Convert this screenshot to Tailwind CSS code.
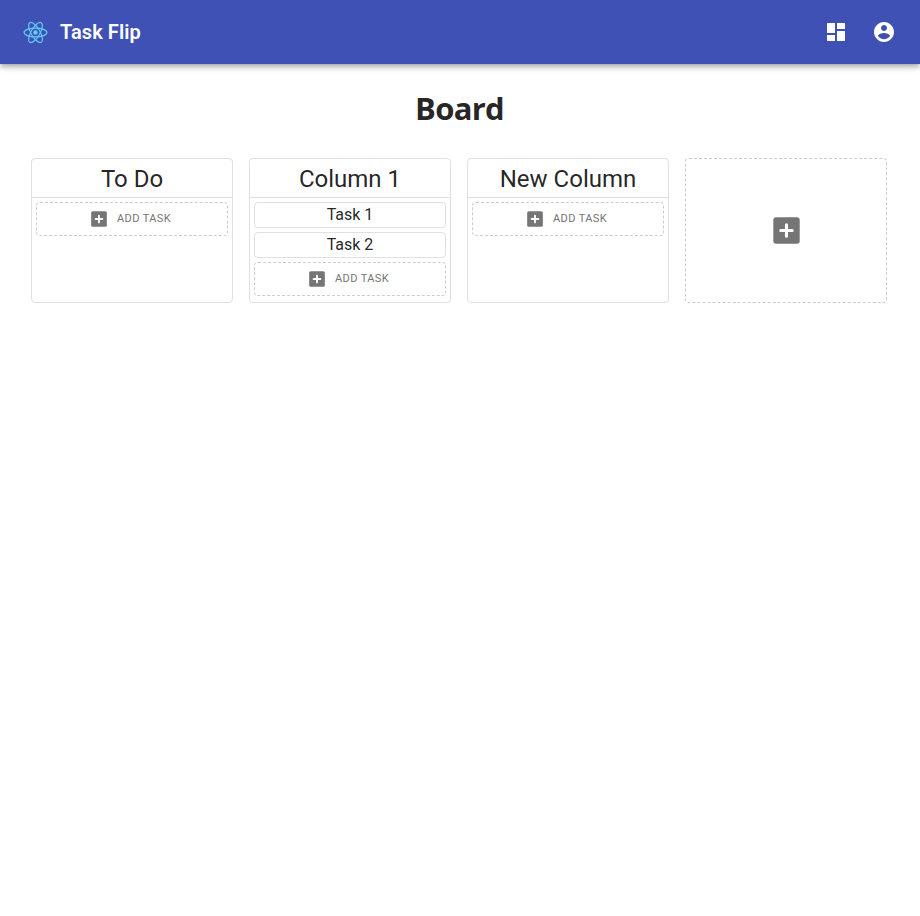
<!DOCTYPE html>
<html lang="en">
<head>
<meta charset="utf-8">
<title>Task Flip</title>
<script src="https://cdn.jsdelivr.net/npm/@tailwindcss/browser@4"></script>
</head>
<body class="min-h-screen bg-white font-[Roboto,sans-serif] text-black/87">
<svg class="hidden">
  <symbol id="plus" viewBox="-0.3 -0.3 27.1 27.1">
    <rect width="26.5" height="26.5" rx="2.8" fill="#757575"/>
    <path d="M13.25 7.5v11.5M7.5 13.25H19" stroke="#fff" stroke-width="3.1" stroke-linecap="round"/>
  </symbol>
</svg>
<header class="flex h-16 items-center bg-[#3f51b5] pl-[23px] pr-6 text-white shadow-[0_2px_4px_-1px_rgba(0,0,0,0.2),0_4px_5px_0_rgba(0,0,0,0.14),0_1px_10px_0_rgba(0,0,0,0.12)]">
  <svg class="h-[25px] w-[25px] shrink-0" viewBox="-12.5 -12.5 25 25" fill="none" stroke="#61cdf8" stroke-width="1.15">
    <circle r="2.3" fill="#61cdf8" stroke="none"/>
    <ellipse rx="11.4" ry="4.4"/>
    <ellipse rx="11.4" ry="4.4" transform="rotate(60)"/>
    <ellipse rx="11.4" ry="4.4" transform="rotate(120)"/>
  </svg>
  <span class="ml-3 text-xl font-semibold tracking-[0.08px]">Task Flip</span>
  <div class="ml-auto flex gap-6">
    <svg class="h-6 w-6" viewBox="0 0 24 24" fill="#fff"><path d="M3 13h8V3H3v10zm0 8h8v-6H3v6zm10 0h8V11h-8v10zm0-18v6h8V3h-8z"/></svg>
    <svg class="h-6 w-6" viewBox="0 0 24 24" fill="#fff"><path d="M12 2C6.48 2 2 6.48 2 12s4.480 10 10 10 10-4.480 10-10S17.520 2 12 2zm0 3c1.660 0 3 1.340 3 3s-1.340 3-3 3-3-1.340-3-3 1.340-3 3-3zm0 14.200c-2.500 0-4.710-1.280-6-3.220.03-1.990 4-3.080 6-3.080 1.990 0 5.970 1.090 6 3.080-1.290 1.940-3.500 3.220-6 3.220z"/></svg>
  </div>
</header>
<main>
  <h1 class="pt-[20px] pr-px text-center font-['Open_Sans','Noto_Sans',sans-serif] text-[31px] leading-[48px] font-bold tracking-[-0.7px]">Board</h1>
  <div class="mt-[26px] flex gap-4 pl-[31px]">
    <section class="h-[145px] w-[202px] shrink-0 rounded border border-black/12">
      <h2 class="h-[39px] border-b border-black/12 text-center text-2xl leading-[40px]">To Do</h2>
      <div class="flex flex-col gap-1 p-1">
        <button class="flex h-[34px] items-center justify-center rounded border border-dashed border-black/20 text-[11px] tracking-[0.4px] text-[#757575]"><svg class="mr-[9.500px] h-4 w-4"><use href="#plus"/></svg><span class="pr-[1.500px]">ADD TASK</span></button>
      </div>
    </section>
    <section class="h-[145px] w-[202px] shrink-0 rounded border border-black/12">
      <h2 class="h-[39px] border-b border-black/12 text-center text-2xl leading-[40px]">Column 1</h2>
      <div class="flex flex-col gap-1 p-1">
        <div class="h-[26px] rounded border border-black/12 text-center text-base leading-6">Task 1</div>
        <div class="h-[26px] rounded border border-black/12 text-center text-base leading-6">Task 2</div>
        <button class="flex h-[34px] items-center justify-center rounded border border-dashed border-black/20 text-[11px] tracking-[0.4px] text-[#757575]"><svg class="mr-[9.500px] h-4 w-4"><use href="#plus"/></svg><span class="pr-[1.500px]">ADD TASK</span></button>
      </div>
    </section>
    <section class="h-[145px] w-[202px] shrink-0 rounded border border-black/12">
      <h2 class="h-[39px] border-b border-black/12 text-center text-2xl leading-[40px]">New Column</h2>
      <div class="flex flex-col gap-1 p-1">
        <button class="flex h-[34px] items-center justify-center rounded border border-dashed border-black/20 text-[11px] tracking-[0.4px] text-[#757575]"><svg class="mr-[9.500px] h-4 w-4"><use href="#plus"/></svg><span class="pr-[1.500px]">ADD TASK</span></button>
      </div>
    </section>
    <button class="flex h-[145px] w-[202px] shrink-0 items-center justify-center rounded border border-dashed border-black/20" aria-label="Add column"><svg class="ml-px h-[27px] w-[27px]"><use href="#plus"/></svg></button>
  </div>
</main>
</body>
</html>
